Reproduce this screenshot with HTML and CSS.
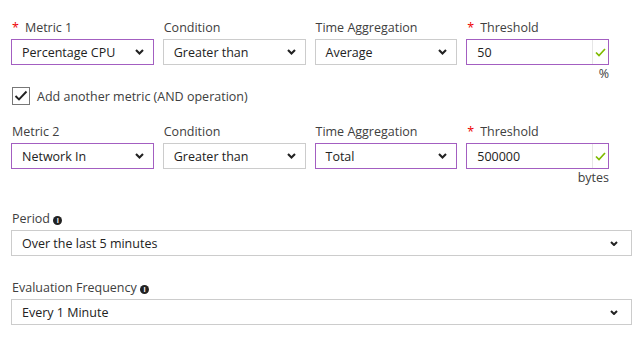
FILE: index.html
```html
<!DOCTYPE html>
<html lang="en">
<head>
  <meta charset="UTF-8" />
  <title>Alert rule criteria</title>
  <link rel="stylesheet" href="styles.css">
</head>
<body>
  <div class="criteria">
    <div class="metric-row">
      <div class="field">
        <label><span class="req">*</span>Metric 1</label>
        <div class="dropdown active">
          <span>Percentage CPU</span>
          <svg class="chev" width="9" height="6" viewBox="0 0 9 6"><path d="M1 1 L4.5 4.5 L8 1" fill="none" stroke="#222" stroke-width="2.1"/></svg>
        </div>
      </div>
      <div class="field">
        <label>Condition</label>
        <div class="dropdown">
          <span>Greater than</span>
          <svg class="chev" width="9" height="6" viewBox="0 0 9 6"><path d="M1 1 L4.5 4.5 L8 1" fill="none" stroke="#222" stroke-width="2.1"/></svg>
        </div>
      </div>
      <div class="field">
        <label>Time Aggregation</label>
        <div class="dropdown">
          <span>Average</span>
          <svg class="chev" width="9" height="6" viewBox="0 0 9 6"><path d="M1 1 L4.5 4.5 L8 1" fill="none" stroke="#222" stroke-width="2.1"/></svg>
        </div>
      </div>
      <div class="field">
        <label><span class="req">*</span>Threshold</label>
        <div class="textbox active">
          <span>50</span>
          <span class="valid">
            <svg width="11" height="9" viewBox="0 0 11 9"><path d="M1 4.5 L4 7.5 L10 1" fill="none" stroke="#7fba00" stroke-width="1.7"/></svg>
          </span>
        </div>
        <div class="unit">%</div>
      </div>
    </div>

    <div class="check-row">
      <span class="checkbox">
        <svg width="14" height="12" viewBox="0 0 14 12"><path d="M1.5 6 L5 9.5 L12.5 1.5" fill="none" stroke="#222" stroke-width="1.9"/></svg>
      </span>
      <span>Add another metric (AND operation)</span>
    </div>

    <div class="metric-row">
      <div class="field">
        <label>Metric 2</label>
        <div class="dropdown active">
          <span>Network In</span>
          <svg class="chev" width="9" height="6" viewBox="0 0 9 6"><path d="M1 1 L4.5 4.5 L8 1" fill="none" stroke="#222" stroke-width="2.1"/></svg>
        </div>
      </div>
      <div class="field">
        <label>Condition</label>
        <div class="dropdown">
          <span>Greater than</span>
          <svg class="chev" width="9" height="6" viewBox="0 0 9 6"><path d="M1 1 L4.5 4.5 L8 1" fill="none" stroke="#222" stroke-width="2.1"/></svg>
        </div>
      </div>
      <div class="field">
        <label>Time Aggregation</label>
        <div class="dropdown active">
          <span>Total</span>
          <svg class="chev" width="9" height="6" viewBox="0 0 9 6"><path d="M1 1 L4.5 4.5 L8 1" fill="none" stroke="#222" stroke-width="2.1"/></svg>
        </div>
      </div>
      <div class="field">
        <label><span class="req">*</span>Threshold</label>
        <div class="textbox active">
          <span>500000</span>
          <span class="valid">
            <svg width="11" height="9" viewBox="0 0 11 9"><path d="M1 4.5 L4 7.5 L10 1" fill="none" stroke="#7fba00" stroke-width="1.7"/></svg>
          </span>
        </div>
        <div class="unit">bytes</div>
      </div>
    </div>

    <div class="wide-field">
      <label>Period <span class="info">i</span></label>
      <div class="dropdown">
        <span>Over the last 5 minutes</span>
        <svg class="chev" width="8" height="5" viewBox="0 0 8 5"><path d="M1 1 L4 4 L7 1" fill="none" stroke="#222" stroke-width="2"/></svg>
      </div>
    </div>

    <div class="wide-field">
      <label>Evaluation Frequency <span class="info">i</span></label>
      <div class="dropdown">
        <span>Every 1 Minute</span>
        <svg class="chev" width="8" height="5" viewBox="0 0 8 5"><path d="M1 1 L4 4 L7 1" fill="none" stroke="#222" stroke-width="2"/></svg>
      </div>
    </div>
  </div>
</body>
</html>
```

FILE: styles.css
```css
* {
  box-sizing: border-box;
  margin: 0;
  padding: 0;
}

body {
  background: #fff;
  font-family: 'Open Sans', 'Noto Sans', sans-serif;
  font-size: 12.5px;
  color: #222;
}

.criteria {
  width: 621px;
  margin-left: 11px;
  padding-top: 19px;
}

.metric-row {
  display: grid;
  grid-template-columns: repeat(4, 1fr);
  column-gap: 9px;
  width: 598px;
}

label {
  display: block;
  height: 20px;
  line-height: 17px;
  color: #404040;
  padding-left: 1px;
}

.req {
  color: #e00;
  margin-right: 6px;
}

.dropdown,
.textbox {
  display: flex;
  align-items: center;
  justify-content: space-between;
  height: 26px;
  border: 1px solid #ccc;
  padding: 0 9px 0 10px;
  background: #fff;
}

.dropdown.active,
.textbox.active {
  border-color: #a35ec1;
}

.textbox {
  padding-right: 0;
}

.valid {
  display: flex;
  align-items: center;
  justify-content: center;
  width: 16px;
  height: 100%;
  border-left: 1px solid #e6e6e6;
}

.unit {
  text-align: right;
  height: 18px;
  line-height: 18px;
  color: #404040;
}

.check-row {
  display: flex;
  align-items: center;
  gap: 7px;
  margin: 4px 0 18px 1px;
  color: #404040;
}

.checkbox {
  display: flex;
  align-items: center;
  justify-content: center;
  width: 18px;
  height: 18px;
  border: 1px solid #777;
}

.wide-field {
  margin-top: 23px;
}

.wide-field .dropdown {
  padding-right: 13px;
}

.info {
  display: inline-block;
  width: 9px;
  height: 9px;
  border-radius: 50%;
  background: #222;
  color: #fff;
  font-size: 7px;
  font-weight: bold;
  line-height: 9px;
  text-align: center;
  vertical-align: 0;
}
```
